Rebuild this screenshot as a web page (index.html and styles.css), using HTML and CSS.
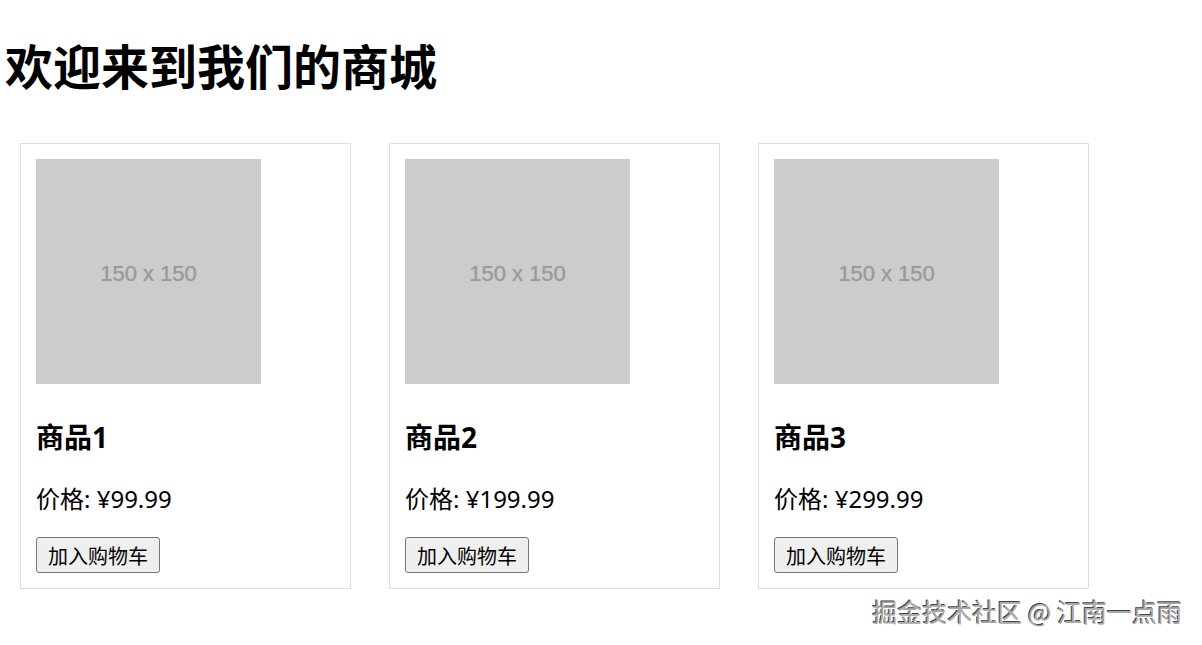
FILE: index.html
```html
<!DOCTYPE html>
<html lang="zh-CN">
<head>
  <meta charset="utf-8">
  <title>商城</title>
  <link rel="stylesheet" href="styles.css">
</head>
<body>

  <h1 class="title">欢迎来到我们的商城</h1>

  <div class="products">
    <div class="product">
      <div class="thumb"><span>150 x 150</span></div>
      <h3>商品1</h3>
      <p>价格: ¥99.99</p>
      <button>加入购物车</button>
    </div>
    <div class="product">
      <div class="thumb"><span>150 x 150</span></div>
      <h3>商品2</h3>
      <p>价格: ¥199.99</p>
      <button>加入购物车</button>
    </div>
    <div class="product">
      <div class="thumb"><span>150 x 150</span></div>
      <h3>商品3</h3>
      <p>价格: ¥299.99</p>
      <button>加入购物车</button>
    </div>
  </div>

  <div class="watermark">掘金技术社区 @ 江南一点雨</div>

</body>
</html>
```

FILE: styles.css
```css
body {
  margin: 0;
  padding: 0 0 0 5px;
  font-family: "Noto Sans", "Noto Sans CJK SC", sans-serif;
  color: #000;
  background: #fff;
}

.title {
  font-size: 48px;
  line-height: 68px;
  margin: 33px 0 42px;
  font-weight: bold;
}

.products {
  display: flex;
  gap: 38px;
  margin-left: 15px;
}

.product {
  width: 299px;
  padding: 15px;
  border: 1px solid #ddd;
}

.thumb {
  width: 225px;
  height: 225px;
  background: #cccccc;
  display: flex;
  justify-content: center;
  align-items: center;
}

.thumb span {
  font-family: "Liberation Sans", Arial, sans-serif;
  font-size: 22px;
  color: #999;
  padding-top: 5px;
  text-shadow: 0 0 1px #aaa;
}

.product h3 {
  font-size: 28px;
  line-height: 38px;
  margin: 34px 0 0;
}

.product p {
  font-size: 24px;
  line-height: 32px;
  margin: 27px 0 22px;
}

.product button {
  font-family: "Noto Sans CJK SC", sans-serif;
  font-size: 20px;
  line-height: 29px;
  height: 36px;
  padding: 0 11px;
  border: 1px solid #767676;
  border-radius: 3px;
  background: #efefef;
  color: #000;
  display: block;
}

.watermark {
  position: absolute;
  right: 20px;
  top: 594px;
  font-family: "Noto Sans CJK SC", sans-serif;
  font-size: 25px;
  line-height: 34px;
  color: #a8a8a8;
  text-shadow: 1px 1px 0 #fff, -1px -1px 0 #444;
}
```
